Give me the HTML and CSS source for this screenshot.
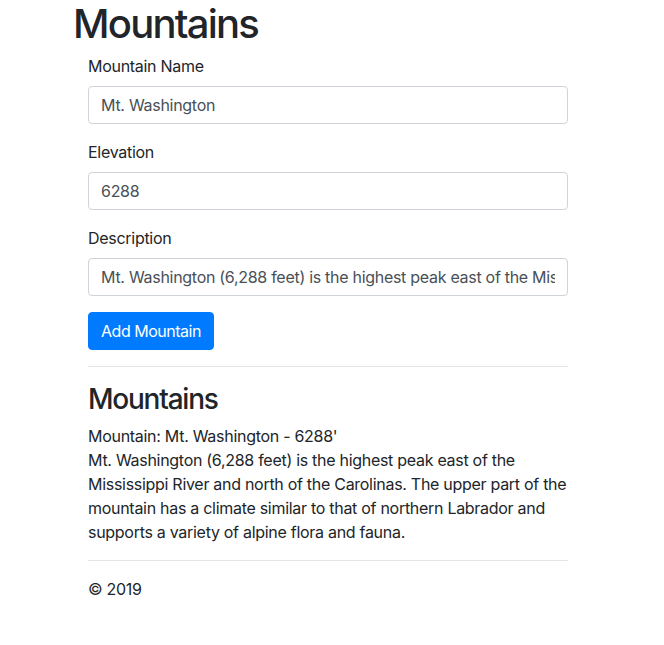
FILE: index.html
```html
<!DOCTYPE html>
<html lang="en">
<head>
<meta charset="utf-8">
<title>Mountains</title>
<link rel="stylesheet" href="styles.css">
</head>
<body>
<div class="page">
  <h1 class="title">Mountains</h1>
  <div class="content">
    <form class="mountain-form">
      <div class="form-group">
        <label class="form-label" for="name">Mountain Name</label>
        <input class="form-control" id="name" type="text" value="Mt. Washington">
      </div>
      <div class="form-group">
        <label class="form-label" for="elevation">Elevation</label>
        <input class="form-control" id="elevation" type="text" value="6288">
      </div>
      <div class="form-group">
        <label class="form-label" for="description">Description</label>
        <input class="form-control" id="description" type="text" value="Mt. Washington (6,288 feet) is the highest peak east of the Mississippi River and north of the Carolinas. The upper part of the mountain has a climate similar to that of northern Labrador and supports a variety of alpine flora and fauna.">
      </div>
      <button class="btn-primary" type="button">Add Mountain</button>
    </form>
    <hr class="divider">
    <h3 class="list-title">Mountains</h3>
    <div class="mountain">
      <div class="mountain-head">Mountain: Mt. Washington - 6288'</div>
      <div class="mountain-desc">Mt. Washington (6,288 feet) is the highest peak east of the Mississippi River and north of the Carolinas. The upper part of the mountain has a climate similar to that of northern Labrador and supports a variety of alpine flora and fauna.</div>
    </div>
    <hr class="divider">
    <footer class="footer">© 2019</footer>
  </div>
</div>
</body>
</html>
```

FILE: styles.css
```css
* { box-sizing: border-box; }
html, body { margin: 0; padding: 0; background: #fff; }
body {
  font-family: Inter, "Liberation Sans", sans-serif;
  font-size: 16px;
  line-height: 1.5;
  letter-spacing: -0.018em;
  color: #212529;
}
.page {
  width: 510px;
  margin-left: 73px;
}
.title {
  margin: 0 0 6px;
  font-size: 40px;
  font-weight: 500;
  line-height: 1.2;
  letter-spacing: -0.044em;
}
.content {
  padding: 0 15px;
}
.mountain-form { margin: 0; }
.form-group { margin-bottom: 16px; }
.form-label {
  display: inline-block;
  margin-bottom: 8px;
}
.form-control {
  display: block;
  width: 100%;
  height: 38px;
  padding: 6px 12px;
  font-family: inherit;
  font-size: 16px;
  line-height: 1.5;
  letter-spacing: inherit;
  color: #495057;
  background: #fff;
  border: 1px solid #ced4da;
  border-radius: 4px;
  outline: none;
}
.btn-primary {
  display: inline-block;
  height: 38px;
  padding: 6px 12px;
  font-family: inherit;
  font-size: 16px;
  line-height: 1.5;
  letter-spacing: -0.03em;
  color: #fff;
  background: #007bff;
  border: 1px solid #007bff;
  border-radius: 4px;
}
.divider {
  margin: 16px 0;
  border: 0;
  border-top: 1px solid rgba(0,0,0,.1);
  height: 0;
}
.list-title {
  margin: 0 0 7px;
  font-size: 28px;
  font-weight: 500;
  line-height: 1.2;
  letter-spacing: -0.044em;
}
```
